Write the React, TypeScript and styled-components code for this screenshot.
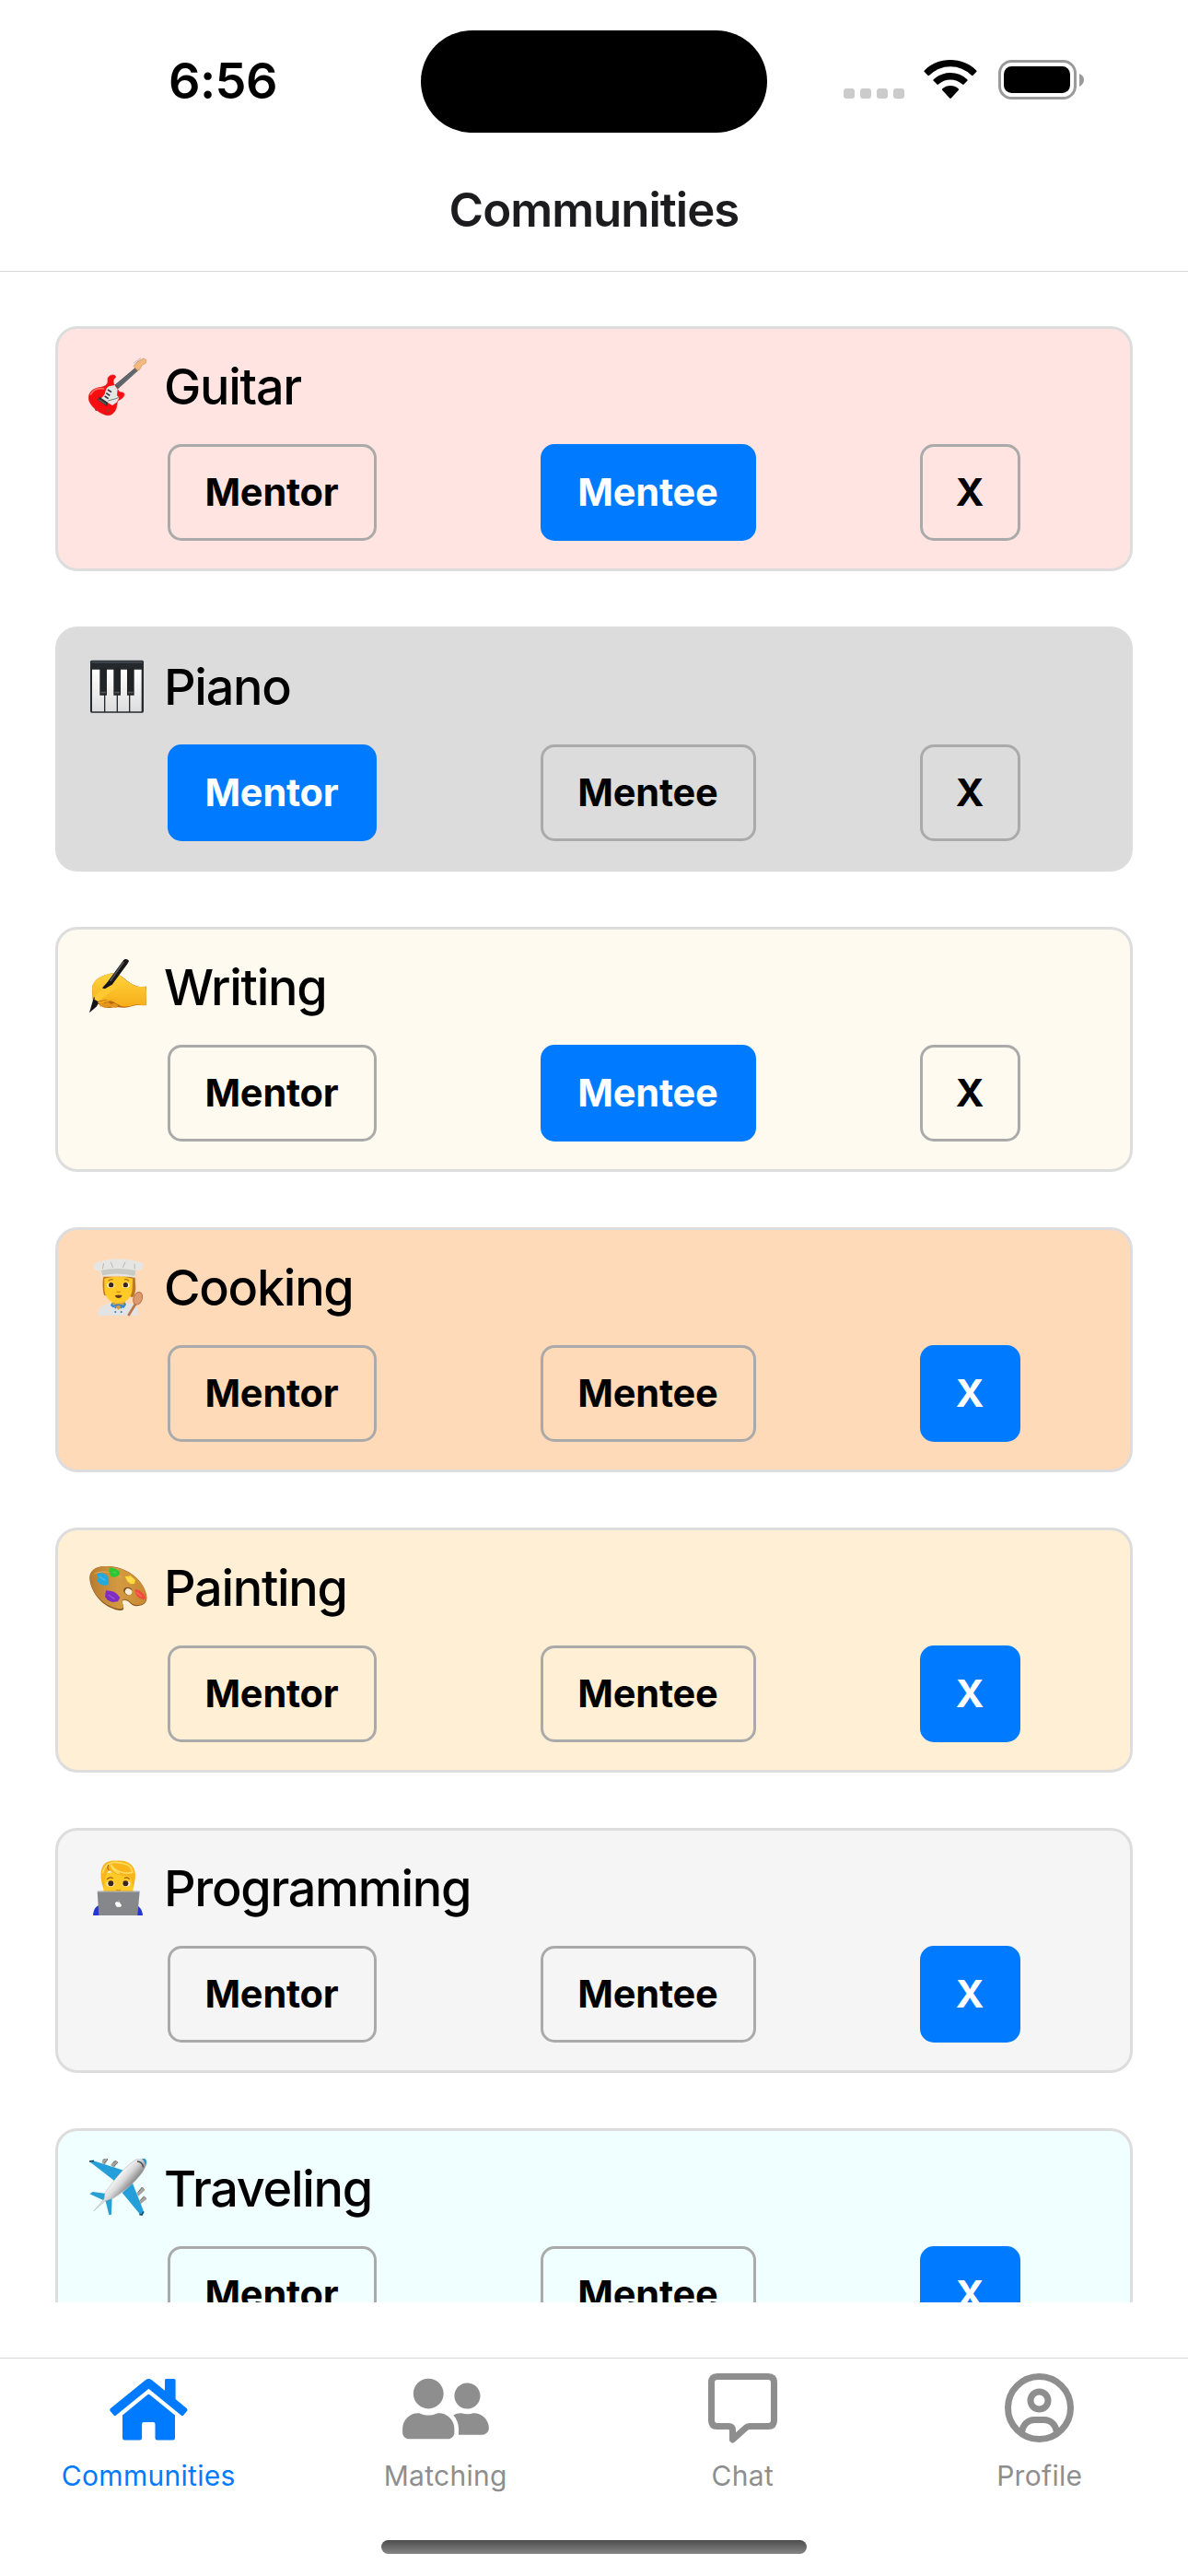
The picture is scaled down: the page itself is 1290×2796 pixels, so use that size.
import React from "react";
import styled, { createGlobalStyle } from "styled-components";
import { FaUserFriends } from "react-icons/fa";

const GlobalStyle = createGlobalStyle`
  * { box-sizing: border-box; }
  html, body { margin: 0; padding: 0; background: #fff; }
  body { font-family: Inter, "Liberation Sans", sans-serif; color: #000; }
`;

const Screen = styled.div`
  width: 1290px;
  height: 2796px;
  display: flex;
  flex-direction: column;
  background: #fff;
  overflow: hidden;
`;

const StatusBar = styled.div`
  height: 177px;
  display: grid;
  grid-template-columns: 457px 376px 1fr;
  align-items: start;
`;

const Clock = styled.div`
  padding: 56px 0 0 183px;
  font-size: 54px;
  line-height: 64px;
  font-weight: 600;
  letter-spacing: -0.6px;
`;

const Island = styled.div`
  height: 111px;
  margin-top: 33px;
  border-radius: 56px;
  background: #000;
`;

const StatusIcons = styled.div`
  display: flex;
  align-items: flex-start;
  padding: 64px 0 0 83px;
`;

const SignalDots = styled.div`
  display: flex;
  gap: 6px;
  margin: 32px 21px 0 0;
`;

const Dot = styled.span`
  width: 12px;
  height: 11px;
  border-radius: 3px;
  background: #cbcbcb;
`;

const Header = styled.header`
  height: 118px;
  display: flex;
  justify-content: center;
  padding-top: 20px;
  border-bottom: 1px solid #d8d8d8;
  color: #1c1c1e;
  font-size: 51px;
  line-height: 62px;
  font-weight: 600;
  letter-spacing: -1px;
`;

const List = styled.main`
  height: 2204px;
  padding: 59px 60px 0;
  display: flex;
  flex-direction: column;
  gap: 60px;
  overflow: hidden;
`;

const Card = styled.section<{ $bg: string }>`
  flex: none;
  height: 266px;
  padding: 30px;
  border: 3px solid #ddd;
  border-radius: 24px;
  background: ${(p) => p.$bg};
`;

const CardTitle = styled.h2`
  display: flex;
  align-items: center;
  gap: 15px;
  height: 70px;
  margin: 0 0 25px;
  font-size: 54px;
  font-weight: 500;
`;

const CardName = styled.span`
  line-height: 66px;
  padding-bottom: 5px;
  letter-spacing: -1.3px;
`;

const Choices = styled.div`
  display: flex;
  justify-content: space-around;
`;

const Choice = styled.button<{ $on: boolean; $w: number }>`
  width: ${(p) => p.$w}px;
  height: 105px;
  padding: 0 1px 2px 0;
  border: 3px solid ${(p) => (p.$on ? "#007bff" : "#aaa")};
  border-radius: 15px;
  background: ${(p) => (p.$on ? "#007bff" : "transparent")};
  color: ${(p) => (p.$on ? "#fff" : "#000")};
  font-family: inherit;
  font-size: 41.500px;
  line-height: 50px;
  font-weight: 700;
  letter-spacing: -0.2px;
`;

const TabBar = styled.nav`
  height: 177px;
  margin-top: 60px;
  display: grid;
  grid-template-columns: repeat(4, 1fr);
  border-top: 1px solid #d8d8d8;
`;

const Tab = styled.div<{ $on?: boolean }>`
  display: flex;
  flex-direction: column;
  align-items: center;
  padding-top: 16px;
  color: ${(p) => (p.$on ? "#007bff" : "#8e8e8f")};
`;

const TabGlyph = styled.div<{ $drop?: number }>`
  height: 76px;
  padding-top: ${(p) => p.$drop ?? 0}px;
  display: flex;
`;

const TabLabel = styled.span`
  margin-top: 17px;
  font-size: 30px;
  line-height: 36px;
  letter-spacing: 0.3px;
`;

const PeopleIcon = styled(FaUserFriends)`
  width: 94px;
  height: 75px;
`;

const HomeArea = styled.footer`
  display: flex;
  justify-content: center;
  padding-top: 21px;
`;

const HomeIndicator = styled.div`
  width: 462px;
  height: 15px;
  border-radius: 8px;
  background: linear-gradient(#4d4d4d, #858585);
`;

const Guitar = () => (
  <svg width="70" height="70" viewBox="39 51 210 210">
    <path d="M133 144 205 83l9 10-70 64z" fill="#555a60" />
    <path d="m140 145 66-56M145 150l64-57" stroke="#999" strokeWidth="1.5" />
    <path d="m195 82 13-15 20-10 8 5-1 10-13 8-6 12-8 5z" fill="#f5b87d" stroke="#c98243" strokeWidth="1.5" />
    <path d="m195 72 24-17M199 76l23-15" stroke="#aaa" strokeWidth="2" />
    <path d="M111 122c4-9 15-14 24-9 5 5-2 8-5 14-3 8 2 18 8 23l10 15c7 5 11 0 16 6 4 9-7 18-17 22-7 4-5 12-7 21-3 16-15 30-31 28-21-3-49-25-57-43-7-16-1-34 15-42 18-9 37-3 44-22z" fill="#f80d10" stroke="#d81b1b" strokeWidth="2" />
    <path d="M55 176c8-20 29-23 45-20" stroke="#ff6b65" strokeWidth="5" fill="none" />
    <path d="m115 148 18-4 10 14-2 19 7 9-8 14-14 10-38-22 9-9c8-8 5-25 18-31z" fill="#e6e6e5" />
    <path d="m106 170 12 8m-7-19 12 8m-22 13 12 8" stroke="#333" strokeWidth="5" />
    <path d="m84 182 28 19-4 12-31-22z" fill="#333" />
    <path d="m80 190 25 16M112 195l29-8 8-7" stroke="#777" strokeWidth="3" fill="none" />
    <path d="m70 218 4 10m36 0 8-3m-11-2 5 8" stroke="#a63535" strokeWidth="5" />
  </svg>
);

const Piano = () => (
  <svg width="70" height="70" viewBox="39 40 210 210">
    <defs>
      <linearGradient id="keys" x2="0" y2="1">
        <stop stopColor="#fff" />
        <stop offset="1" stopColor="#ddd" />
      </linearGradient>
    </defs>
    <rect x="54" y="51" width="174" height="171" rx="5" fill="#24292d" />
    <path d="M58 57h166" stroke="#454d54" strokeWidth="5" />
    <path d="M60 81h39v137H60zM103 81h37v137h-37zM144 81h36v137h-36zM184 81h37v137h-37z" fill="url(#keys)" />
    <path d="M85 77h23v88H85zM130 77h23v88h-23zM174 77h23v88h-23z" fill="#202326" />
    <path d="M88 156h17M133 156h17M177 156h17" stroke="#555" strokeWidth="5" />
  </svg>
);

const Writing = () => (
  <svg width="70" height="70" viewBox="39 59 210 210">
    <defs>
      <linearGradient id="hand" x2="0" y2="1">
        <stop stopColor="#ffd43c" />
        <stop offset="1" stopColor="#f7ae19" />
      </linearGradient>
    </defs>
    <path d="M60 158c4-25 29-39 56-45 20-5 35 3 50 16 16 14 36 27 53 26l17-1v62l-25-1c-18 0-29 9-49 8l-27-2c-13 2-30 7-45-3l-25-17-3-4z" fill="#b86811" />
    <path d="M60 157c4-25 31-38 58-44 18-4 35 5 48 17 17 14 36 26 54 25h13c5 15 4 38 1 60-11 2-23-3-35-1-14 3-35 10-50 1-16-9-31-20-46-18l-30 7-10-3z" fill="url(#hand)" />
    <path d="m84 210 10-6 8 5 9-5 11 8 11-4 12 8-7 8-19-4-16 4-12-7-4 5z" fill="#e3951d" />
    <path d="m93 159 17-19 52-71c5-7 17-5 18 3l-5 9-52 70-20 12z" fill="#171719" />
    <path d="m119 137 44-64" stroke="#555" strokeWidth="5" />
    <path d="m66 188 17 18-9 14-23 20z" fill="#151517" />
    <path d="M72 181c18-12 31-20 52-32l15 7-25 21-35 26-12-7z" fill="#ffca31" />
    <path d="M79 207c19 0 39-14 58-9" fill="none" stroke="#f4ae1d" strokeWidth="5" />
  </svg>
);

const Cook = () => (
  <svg width="70" height="70" viewBox="39 48 210 210">
    <path d="M97 110h103l2 38c-1 15-5 28-11 30l-10-5H109l-10-3c-4-15-6-41-2-60z" fill="#bd7a24" />
    <path d="M78 237c1-22 7-30 25-36l25-7h40l28 7c12 6 15 18 15 36z" fill="#e2e3e2" />
    <path d="m127 187-2 11 21 20 22-20-4-14z" fill="#cda044" />
    <path d="m124 195 6 8 15-4 17 4 5-10 4 8-8 12-17-10-18 8-8-7z" fill="#3d83cb" />
    <path d="M100 116c27-8 63-8 92 0l-1 34c-2 31-25 47-45 47-25 0-45-18-46-47z" fill="#ffca28" />
    <path d="M113 124q8-7 15-4m37 0q8-3 15 4" fill="none" stroke="#a66b20" strokeWidth="4" />
    <ellipse cx="121" cy="138" rx="12" ry="9" fill="#fff4dc" />
    <ellipse cx="170" cy="138" rx="12" ry="9" fill="#fff4dc" />
    <circle cx="122" cy="137" r="8" fill="#3a2418" />
    <circle cx="169" cy="137" r="8" fill="#3a2418" />
    <path d="M140 158q6 5 12 0" fill="none" stroke="#d18a16" strokeWidth="4" />
    <path d="M134 171q12-3 24 0-3 9-12 9t-12-9z" fill="#693719" />
    <path d="m90 111-5-21c-18 3-26-13-16-22 6-7 17-6 26-9 24-9 77-9 104 0 10 4 23 1 27 10 5 12-7 23-23 22l-3 23c-29-9-80-10-110-3z" fill="#e5e6e3" />
    <path d="m90 89 3 17q54-12 106 2l3-18q-56-12-112-1z" fill="#c9cac5" />
    <path d="m121 62 7 19m40-19-8 19M98 66l-4 19m104-17 1 17" stroke="#b8b8b2" strokeWidth="3" />
    <circle cx="136" cy="211" r="3" fill="#2f79c6" />
    <circle cx="155" cy="211" r="3" fill="#2f79c6" />
    <circle cx="136" cy="225" r="3" fill="#2f79c6" />
    <circle cx="155" cy="225" r="3" fill="#2f79c6" />
    <path d="m202 198-24 39" stroke="#bd754b" strokeWidth="8" />
    <ellipse cx="209" cy="181" rx="14" ry="21" fill="#dd9a6e" stroke="#b97149" strokeWidth="3" transform="rotate(20 209 181)" />
  </svg>
);

const Palette = () => (
  <svg width="70" height="70" viewBox="39 37 210 210">
    <defs>
      <linearGradient id="wood">
        <stop stopColor="#b77c30" />
        <stop offset=".5" stopColor="#d49a42" />
        <stop offset="1" stopColor="#c88931" />
      </linearGradient>
    </defs>
    <path d="M53 113C46 78 72 61 115 64c54 3 103 36 119 82 13 35-5 51-36 47-12-2-17-19-34-19-14 2 4 24-3 32-12 8-55-9-75-31-16-17-29-38-33-62z" fill="#8b5722" />
    <path d="M54 106C50 76 76 60 116 65c51 4 102 34 117 80 12 34-5 50-34 44-13-3-18-18-34-18-16 2 3 22-5 29-12 10-57-9-76-31-17-18-28-37-30-63z" fill="url(#wood)" />
    <path d="M67 89c20-11 55-10 91 12" fill="none" stroke="#e5ab53" strokeWidth="3" />
    <ellipse cx="177" cy="145" rx="15" ry="12" fill="#75502a" transform="rotate(25 177 145)" />
    <ellipse cx="179" cy="147" rx="12" ry="10" fill="#ffedd3" transform="rotate(25 179 147)" />
    <path d="M116 70c10-4 33 6 34 14s-8 15-20 15-11-10-15-17z" fill="#29c832" />
    <path d="M75 88c10-5 31-1 36 9l4 21c-4 14-20 7-28 5l-12-12 5-8z" fill="#25a9dd" />
    <path d="m167 98 18-3 16 14-3 12-13 1-10-9z" fill="#ffd83a" />
    <path d="m105 143 14 1 12 3 10 7 10 12-7 13-18 2-15-6-9-12z" fill="#812cc5" />
    <path d="m199 138 14 4 14 11 9 15-9 5-16-7-8-9z" fill="#f34b3d" />
    <path d="m84 98 19 12m24-28 12 5m38 18 13 8m-77 44 20 13m71-21 17 13" stroke="#fff" strokeOpacity=".2" strokeWidth="4" />
  </svg>
);

const Programmer = () => (
  <svg width="70" height="70" viewBox="39 56 210 210">
    <path d="M63 242c2-22 10-31 27-35h111c16 7 22 17 24 35z" fill="#2636d0" />
    <path d="M98 110c9-12 83-12 95 0l3 26-3 28H98l-4-28z" fill="#ffc928" />
    <path d="M90 126C83 78 105 59 141 64c36-3 66 16 59 61l-6 28c-5-14-4-33-17-40-24 1-43-5-62-17-11 12-15 26-16 57-6-8-8-16-9-27z" fill="#f8b51e" />
    <path d="M94 105c8-32 30-39 48-35 29 3 48 9 49 32-26 7-56-3-70-25 4 14 14 24 28 29" fill="none" stroke="#ffdc5b" strokeWidth="5" />
    <path d="M115 96q-8-9-2-19" fill="none" stroke="#95540d" strokeWidth="3" />
    <path d="M108 125q9-10 20-4m37 0q10-6 17 3" fill="none" stroke="#9c5e10" strokeWidth="4" />
    <ellipse cx="120" cy="139" rx="13" ry="9" fill="#fff4da" />
    <ellipse cx="171" cy="139" rx="13" ry="9" fill="#fff4da" />
    <circle cx="121" cy="138" r="9" fill="#3d2517" />
    <circle cx="169" cy="138" r="9" fill="#3d2517" />
    <path d="M138 158q8 5 15 0" fill="none" stroke="#dc9520" strokeWidth="4" />
    <path d="M77 163h138l-7 79H82z" fill="#85878a" />
    <path d="M78 165h135" stroke="#a5a6a9" strokeWidth="4" />
    <path d="M145 199c-9-4-13 4-6 13 4 6 8 1 12 3 5-2 7-7 1-11-3-5 1-6-7-5zm0-2q0-5 5-6" fill="#fff" />
  </svg>
);

const Plane = () => (
  <svg width="70" height="70" viewBox="39 45 210 210">
    <defs>
      <linearGradient id="fuselage" gradientUnits="userSpaceOnUse" x1="145" y1="95" x2="185" y2="130">
        <stop stopColor="#fafafa" />
        <stop offset=".5" stopColor="#d8d8d8" />
        <stop offset="1" stopColor="#8f8f8f" />
      </linearGradient>
    </defs>
    <path d="M91 56l12-14 8 6-10 18zM120 66l13-15 10 6-11 18zM205 157l17-19 10 10-22 20zM211 186l17-18 10 9-23 18z" fill="#a8a4a0" />
    <path d="m94 51 11-9 6 6-12 12m28 0 11-8 6 6-13 11m80 84 12-15 7 8m-14 36 13-14 8 8" fill="none" stroke="#77726e" strokeWidth="3" />
    <path d="m51 54 13-2 110 35-29 40zM158 156l34-31 36 92-5 11-8-3z" fill="#259fda" />
    <path d="m51 54 15-2m162 165-6 11-8-2" fill="none" stroke="#174d6b" strokeWidth="5" />
    <path d="m52 160 10-7 50 7-8 24zM103 179l22-10-2 58-8 1z" fill="#299fd3" />
    <path d="M102 157c28-39 68-95 108-112 19-8 31 2 25 22-9 30-57 77-105 106l-29 11-36 32 34-40z" fill="url(#fuselage)" stroke="#aaa" strokeWidth="1.5" />
    <path d="M219 43c15-2 23 10 15 23q-3-16-15-23z" fill="#2399ce" />
    <path d="M207 54q17 1 20 19" fill="none" stroke="#4e4e4e" strokeWidth="5" />
  </svg>
);

const Wifi = () => (
  <svg width="58" height="44" viewBox="0 0 58 44">
    <path d="M29 1C18 1 8 5 .8 12.4q-.8.8 0 1.6l3.7 3.7q.8.8 1.6 0a32.5 32.5 0 0 1 45.8 0q.8.8 1.6 0l3.7-3.7q.8-.8 0-1.6C50 5 40 1 29 1z" />
    <path d="M29 15c-7 0-13.500 2.700-18.300 7.200q-.8.8 0 1.600l3.800 3.800q.8.7 1.500 0a18.800 18.800 0 0 1 26 0q.8.7 1.600 0l3.700-3.800q.8-.8 0-1.600A26.600 26.600 0 0 0 29 15z" />
    <path d="M29 29c-3.300 0-6.400 1.200-8.700 3.300q-.8.8 0 1.600l7.900 8.600q.8.8 1.600 0l7.900-8.600q.8-.8 0-1.600A13 13 0 0 0 29 29z" />
  </svg>
);

const WifiSlot = styled.div`
  display: flex;
  margin-right: 23px;
`;

const Battery = () => (
  <svg width="94" height="45" viewBox="0 0 94 45">
    <rect x="1.500" y="2.500" width="82" height="40" rx="13" fill="none" stroke="#9a9a9a" strokeWidth="3" />
    <rect x="6" y="8" width="72" height="29" rx="8.500" />
    <path d="M88 16q5 2 5 6.500T88 30z" fill="#9a9a9a" />
  </svg>
);

const HouseIcon = () => (
  <svg width="85" height="67" viewBox="0 0 85 67" fill="currentColor">
    <path d="M39 1.200q3.400-2.400 6.800 0L60 12.700V1.500Q60 0 61.500 0H70q1.600 0 1.600 1.500V22l12 10q1.600 1.600.2 3.300l-3.600 4.200q-1.100 1.200-2.300.2L42.400 10.700 6.800 39.700q-1.200 1-2.300-.2L.9 35.300q-1.400-1.700.2-3.300z" />
    <path d="M41.200 17.300q1.200-.9 2.400 0L71 39.500v24.800q0 2.200-2.200 2.200H51.700q-2.200 0-2.200-2.200V49q0-2-2-2h-10.400q-2 0-2 2v15.300q0 2.200-2.200 2.200H16.200q-2.200 0-2.200-2.200V39.500z" />
  </svg>
);

const ChatIcon = () => (
  <svg width="75" height="76" viewBox="0 0 75 76" fill="none" stroke="currentColor" strokeWidth="7" strokeLinejoin="round">
    <path d="M10 3.500h55q6.500 0 6.500 6.500v41q0 6.500-6.500 6.500H45q-2.500 0-4 1.500L26.500 72V62q0-4.500-4.500-4.500H10q-6.500 0-6.500-6.500V10q0-6.500 6.500-6.500z" />
  </svg>
);

const ProfileIcon = () => (
  <svg width="75" height="76" viewBox="0 0 75 76" fill="none" stroke="currentColor" strokeWidth="7">
    <circle cx="37.500" cy="37.500" r="34" />
    <circle cx="37.500" cy="29.500" r="9.500" />
    <path d="M18.500 64C19.500 56 25 50.500 32 50.500h11c7 0 12.500 5.500 13.500 13.500" />
  </svg>
);

const communities = [
  { name: "Guitar", bg: "#ffe4e1", Icon: Guitar, pick: 1 },
  { name: "Piano", bg: "#dcdcdc", Icon: Piano, pick: 0 },
  { name: "Writing", bg: "#fffaf0", Icon: Writing, pick: 1 },
  { name: "Cooking", bg: "#ffdab9", Icon: Cook, pick: 2 },
  { name: "Painting", bg: "#ffefd5", Icon: Palette, pick: 2 },
  { name: "Programming", bg: "#f5f5f5", Icon: Programmer, pick: 2 },
  { name: "Traveling", bg: "#f0ffff", Icon: Plane, pick: 2 },
];

const roles = [
  { label: "Mentor", width: 227 },
  { label: "Mentee", width: 234 },
  { label: "X", width: 109 },
];

const tabs = [
  { label: "Communities", icon: <HouseIcon />, drop: 6, on: true },
  { label: "Matching", icon: <PeopleIcon />, drop: 1 },
  { label: "Chat", icon: <ChatIcon /> },
  { label: "Profile", icon: <ProfileIcon /> },
];

export default function App() {
  return (
    <Screen>
      <GlobalStyle />
      <StatusBar>
        <Clock>6:56</Clock>
        <Island />
        <StatusIcons>
          <SignalDots>
            <Dot />
            <Dot />
            <Dot />
            <Dot />
          </SignalDots>
          <WifiSlot>
            <Wifi />
          </WifiSlot>
          <Battery />
        </StatusIcons>
      </StatusBar>
      <Header>Communities</Header>
      <List>
        {communities.map(({ name, bg, Icon, pick }) => (
          <Card key={name} $bg={bg}>
            <CardTitle>
              <Icon />
              <CardName>{name}</CardName>
            </CardTitle>
            <Choices>
              {roles.map((role, i) => (
                <Choice key={role.label} $on={i === pick} $w={role.width}>
                  {role.label}
                </Choice>
              ))}
            </Choices>
          </Card>
        ))}
      </List>
      <TabBar>
        {tabs.map((tab) => (
          <Tab key={tab.label} $on={tab.on}>
            <TabGlyph $drop={tab.drop}>{tab.icon}</TabGlyph>
            <TabLabel>{tab.label}</TabLabel>
          </Tab>
        ))}
      </TabBar>
      <HomeArea>
        <HomeIndicator />
      </HomeArea>
    </Screen>
  );
}
